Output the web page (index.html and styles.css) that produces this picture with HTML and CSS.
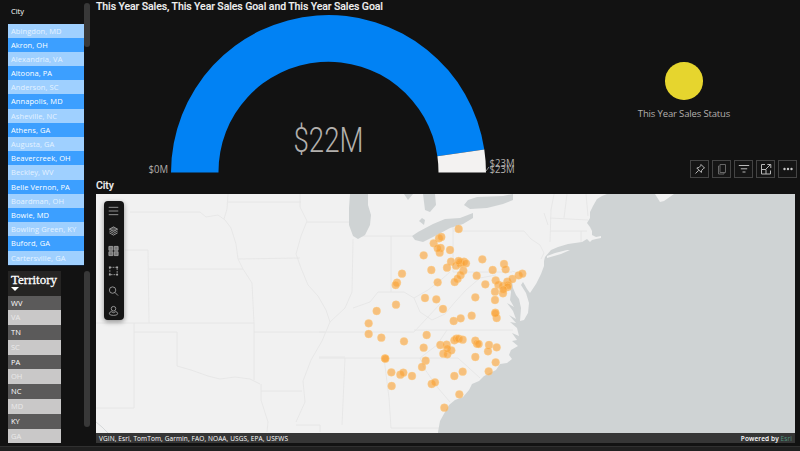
FILE: index.html
```html
<!DOCTYPE html>
<html lang="en">
<head>
<meta charset="utf-8">
<title>Sales Report</title>
<link rel="stylesheet" href="styles.css">
</head>
<body>
<div class="report">
  <aside class="sidebar">
    <section class="slicer">
      <div class="city-panel">
        <h2 class="city-head">City</h2>
        <ul class="rows city-rows">
          <li>Abingdon, MD</li><li>Akron, OH</li><li>Alexandria, VA</li><li>Altoona, PA</li><li>Anderson, SC</li><li>Annapolis, MD</li><li>Asheville, NC</li><li>Athens, GA</li><li>Augusta, GA</li><li>Beavercreek, OH</li><li>Beckley, WV</li><li>Belle Vernon, PA</li><li>Boardman, OH</li><li>Bowie, MD</li><li>Bowling Green, KY</li><li>Buford, GA</li><li>Cartersville, GA</li>
        </ul>
      </div>
      <div class="scroll scroll-city"></div>
    </section>
    <section class="slicer territory">
      <div class="territory-panel">
        <h2 class="territory-head">Territory</h2>
        <ul class="rows territory-rows">
          <li>WV</li><li>VA</li><li>TN</li><li>SC</li><li>PA</li><li>OH</li><li>NC</li><li>MD</li><li>KY</li><li>GA</li>
        </ul>
      </div>
      <div class="scroll scroll-territory"></div>
    </section>
  </aside>
  <main class="main">
    <div class="top">
      <section class="gauge">
        <h1 class="title">This Year Sales, This Year Sales Goal and This Year Sales Goal</h1>
        <svg width="434" height="165" viewBox="96 14 434 165">
          <path fill="#0182f4" d="M171 172.5A157.5 157.5 0 0 1 484.3 149.5L437.4 156.2A110 110 0 0 0 218.5 172.5Z"/>
          <path fill="#f3f2f1" d="M484.3 149.5A157.5 157.5 0 0 1 486 172.5H438.5A110 110 0 0 0 437.4 156.2Z"/>
          <path stroke="#aaa" stroke-width=".8" d="M486 171l3-4"/>
          <text class="value" x="293.500" y="152" textLength="70" lengthAdjust="spacingAndGlyphs">$22M</text>
          <text class="axis" x="148.500" y="172.500" textLength="19.500" lengthAdjust="spacingAndGlyphs">$0M</text>
          <text class="axis" x="489.500" y="166.500" textLength="25" lengthAdjust="spacingAndGlyphs">$23M</text>
          <text class="axis" x="489.500" y="172.500" textLength="25" lengthAdjust="spacingAndGlyphs">$23M</text>
        </svg>
      </section>
      <section class="kpi">
        <div class="kpi-body">
          <div class="dot"></div>
          <div class="kpi-label">This Year Sales Status</div>
        </div>
        <div class="actions">
          <button><svg viewBox="0 0 12 12"><path d="M7 1.500l3.500 3.500-1 .4-1.800 1.900-.4 2.200L2.800 5l2.200-.5 1.700-1.800zM4.700 7.300L1.500 10.500"/></svg></button>
          <button class="dim"><svg viewBox="0 0 12 12"><path d="M4 1.500h5.500v8H4zM3.500 3h-1v8h5.500v-1"/></svg></button>
          <button><svg viewBox="0 0 12 12"><path d="M.8 2.500h10.400M2.800 5.800h6.400M4.500 9h3"/></svg></button>
          <button><svg viewBox="0 0 12 12"><path d="M5 1.500H1.500v9.500H10.500V7.500M1.500 6.500H6V11M6 6L10.500 1.500M7.300 1.500h3.500V5"/></svg></button>
          <button><svg viewBox="0 0 12 12"><g fill="#c8c8c8" stroke="none"><circle cx="2.500" cy="6" r="1.200"/><circle cx="6" cy="6" r="1.200"/><circle cx="9.500" cy="6" r="1.200"/></g></svg></button>
        </div>
      </section>
    </div>
    <h2 class="title map-title">City</h2>
    <section class="map">
      <svg class="canvas" width="699" height="249" viewBox="96 194 699 249">
        <g class="borders">
          <path d="M130 212H200L206 217 218 215 225 220 231 228 236 244 238 259 243 269 252 283 254 323M228 194L227 209 224 219M228 202H301M238 259L300 258M125 250H148L149 323M149 269H243M96 323H254M134 323V408H96M134 332H177V366L191 370 208 376 220 379 235 377 250 379 260 384M254 332H325M254 323V380M261 384V400L268 422 267 432M261 391H302M319 357H345M330 322L322 341 311 360 303 381 305 402 296 422M296 425H320V432"/>
          <path d="M300 194V207L307 221 301 236 296 254 301 268 308 285 318 296 326 310 330 322 345 308 352 292 353 239M307 222H349M391 236V292M358 236H412M453 231H524L531 239 540 245M453 225V272H512M353 308L370 302 378 292 392 292 404 292 414 298 428 290 442 279 450 272M414 298L420 312 432 320 445 314 455 302 466 290 480 278 496 275M319 332H414L440 304M414 330H513M319 358H420L437 345 447 330M420 358H458L480 378M345 358L342 425M384 358L389 398 391 428M420 358L424 368 438 388 450 402M391 428H440M512 271L524 275"/>
          <path d="M540 245L544 253 541 259M554 194L551 210 550 242M567 194L564 218M550 218L588 220M550 231H587M581 231V242M586 194L588 216M544 213L548 225"/>
          <path class="coastline" d="M96 422L102 427 108 433"/>
        </g>
        <g class="water">
          <path d="M607 194L602 196 597 199 593 206 590 212 590 218 587 223 590 227 592 231 592 235 596 237 601 236 601 238 596 239 592 240 590 242 587 239 582 242 568 244 558 247 551 250 545 257 544 261 544 266 541 274 536 284 530 293 527 289 523 282 521 285 526 293 529 303 528 313 524 320 520 321 521 308 519 299 516 295 513 288 512 281 509 286 511 292 510 300 514 307 507 303 513 311 516 319 509 315 516 323 510 322 517 328 519 336 512 333 517 340 512 341 518 346 511 350 509 355 512 359 507 363 500 364 496 370 490 373 484 376 479 381 472 384 469 390 463 397 455 400 449 405 445 412 440 421 438 432V443H795V194Z"/>
          <path d="M350 194 349 208V225L353 236 358 239 365 235 370 225 371 215 368 205V194ZM423 194 425 210 430 212 436 205 435 194ZM404 194 408 200 413 194ZM412 236 418 232 433 224 445 219 460 218 473 213 473 218 463 224 450 228 437 235 423 242 415 240ZM464 205 468 200 477 197 503 196 513 194 513 200 503 204 487 208 470 209ZM419 221 422 218 425 220 424 225Z"/>
        </g>
        <path fill="#f1f1f1" d="M547 256L555 253 567 250 570 250 561 254 547 258ZM655 194H674L664 201 660 202Z"/>
        <g id="stores"></g>
      </svg>
      <nav class="tools">
        <svg viewBox="0 0 12 12"><path d="M.8 2h10.400M.8 6h10.400M.8 10h10.400"/></svg>
        <svg viewBox="0 0 12 12"><path fill="#555" d="M6 1.500L10.500 4 6 6.500 1.500 4z"/><path d="M1.500 6L6 8.500 10.500 6M1.500 8L6 10.500 10.500 8"/></svg>
        <svg viewBox="0 0 12 12"><path fill="#777" d="M1 1h4.200v4.200H1zM6.800 1H11v4.200H6.800zM1 6.800h4.200V11H1zM6.800 6.800H11V11H6.800z"/></svg>
        <svg viewBox="0 0 12 12"><path d="M2 2h8v8H2z" stroke-dasharray="2 1"/><path fill="#aaa" stroke="none" d="M1 1h2v2H1zM9 1h2v2H9zM1 9h2v2H1zM9 9h2v2H9z"/></svg>
        <svg viewBox="0 0 12 12"><circle cx="5" cy="5" r="3.500"/><path d="M7.500 7.500l3.500 3.500"/></svg>
        <svg viewBox="0 0 12 12"><circle cx="6" cy="3.500" r="2.500"/><path d="M3.500 6.700Q1.500 7 1.500 9q0 1.800 4.500 1.800T10.500 9q0-2-2-2.300Q6 9 3.500 6.700z"/></svg>
      </nav>
      <footer class="credits">
        <span>VGIN, Esri, TomTom, Garmin, FAO, NOAA, USGS, EPA, USFWS</span>
        <span class="powered">Powered by <a>Esri</a></span>
      </footer>
    </section>
  </main>
</div>
<div class="bottom-bar"></div>
<script src="map.js"></script>
</body>
</html>
```
FILE: styles.css
```css
* { box-sizing: border-box; }
body { margin: 0; width: 800px; height: 451px; overflow: hidden; background: #121212; color: #fff; font-family: "Open Sans", "Noto Sans", sans-serif; display: flex; flex-direction: column; }
h1, h2, ul { margin: 0; padding: 0; }
.report { display: grid; grid-template-columns: 96px 704px; height: 446px; flex: none; }
.sidebar { padding-left: 8px; }
.slicer { display: flex; }
.city-panel { width: 76px; height: 266px; border-bottom: 1px solid #12243c; }
.city-head { height: 23.500px; padding: 4.500px 3px 0; font-size: 7.500px; line-height: 12px; font-weight: 500; }
.rows { list-style: none; font-size: 7.500px; white-space: nowrap; }
.rows li { padding-left: 3px; }
.city-rows li { height: 14.200px; line-height: 14.500px; letter-spacing: .08px; background: #3c9fff; }
.city-rows li:nth-child(odd) { background: #9fd0ff; color: #e4f2ff; }
.scroll { width: 6px; border-radius: 3px; background: #383838; }
.scroll-city { height: 44px; margin-top: 3px; }
.territory { margin-top: 5px; }
.territory-panel { width: 76px; }
.territory-head { width: 53px; height: 24.500px; padding-left: 3px; background: #252423; font: 400 13px/17px "Liberation Serif", serif; -webkit-text-stroke: .3px #fff; }
.territory-head::after { content: ""; display: block; width: 0; border: 4px solid transparent; border-top-color: #fff; border-bottom: 0; margin-top: -1px; }
.territory-rows { width: 53px; }
.territory-rows li { height: 14.800px; line-height: 15px; background: #5b5a5a; }
.territory-rows li:nth-child(even) { background: #c9c8c8; color: #e9e9e9; }
.scroll-territory { height: 156px; }
.main { display: flex; flex-direction: column; }
.top { display: flex; height: 179px; }
.gauge { width: 434px; }
.gauge svg { display: block; }
.title { height: 14px; font: 500 10.500px/14px Roboto, sans-serif; letter-spacing: -.085px; color: #f0f0f0; white-space: nowrap; -webkit-text-stroke: .1px #f0f0f0; }
.value { font: 300 35px Roboto, sans-serif; fill: #b3b0ad; }
.axis { font: 400 10px "Open Sans", sans-serif; fill: #b3b0ad; }
.kpi { width: 270px; display: flex; flex-direction: column; }
.kpi-body { height: 160px; padding: 62px 0 0 38px; display: flex; flex-direction: column; align-items: center; }
.dot { flex: none; width: 37.500px; height: 37.500px; border-radius: 50%; background: #e6d52e; }
.kpi-label { margin-top: 6px; font-size: 9.500px; line-height: 15px; letter-spacing: -.15px; color: #b3b0ad; white-space: nowrap; }
.actions { display: flex; gap: 3px; margin-left: 160px; }
.actions button { display: flex; align-items: center; justify-content: center; width: 19px; height: 18px; padding: 0; border: 1px solid #444; background: #151515; }
.actions svg { width: 12px; height: 12px; flex: none; fill: none; stroke: #b8b8b8; stroke-width: 1; }
.actions .dim svg { stroke: #666; }
.map-title { height: 15px; }
.map { position: relative; width: 699px; height: 249px; background: #f1f1f1; overflow: hidden; }
.canvas { display: block; }
.water { fill: #cfd3d4; }
.borders { fill: none; stroke: #e4e4e4; stroke-width: .8; }
.borders .coastline { stroke: #cfd3d4; }
#stores { fill: #f9a136; fill-opacity: .62; stroke: #ffd08a; stroke-opacity: .6; stroke-width: .7; }
.tools { position: absolute; left: 7.500px; top: 7px; width: 20.500px; height: 119px; padding: 4px 0 3px; border-radius: 4px; background: #151515; box-shadow: 0 2px 5px #0006; display: flex; flex-direction: column; align-items: center; justify-content: space-between; }
.tools svg { width: 11px; height: 12px; fill: none; stroke: #aaa; stroke-width: .9; }
.credits { position: absolute; inset: auto 0 0; height: 10px; padding: 0 3px; background: #363636; display: flex; justify-content: space-between; font-size: 6.500px; line-height: 11px; letter-spacing: .11px; }
.powered { font-weight: 600; }
.powered a { color: #4f9580; font-weight: 400; }
.bottom-bar { height: 5px; background: #202020; border-top: 1px solid #303030; }
```
FILE: map.js
```js
// Store positions in map units, three units per pixel, from each region's origin.
const regions = [
  { x: 290, y: 185, points: [[506,132],[447,160],[454,156],[431,175],[452,189],[449,203],[443,190],[480,195],[401,211],[336,266],[321,293],[317,300],[424,255],[443,292],[471,248],[483,230],[511,232],[512,236],[522,230],[528,235],[498,242],[506,228],[520,257],[512,270],[503,281],[494,291],[577,223],[560,272],[586,298],[608,255],[642,237],[647,253],[617,286],[625,299],[638,303],[652,290],[667,282],[686,271],[697,266],[654,300],[653,306],[639,325],[640,314],[615,320],[615,345],[405,339],[439,343],[459,372],[556,337],[318,359],[260,378]] },
  { x: 340, y: 300, points: [[341,63],[362,55],[395,47],[466,38],[470,54],[466,40],[86,70],[86,102],[124,113],[192,124],[260,105],[251,143],[301,135],[320,134],[310,161],[322,163],[334,151],[343,121],[349,116],[356,116],[368,119],[322,146],[406,122],[411,131],[416,132],[447,135],[444,154],[470,142],[406,171],[467,187],[446,214],[135,175],[136,176],[257,182],[246,201],[154,217],[181,224],[190,218],[216,228],[155,258],[275,252],[285,247],[343,228],[368,215],[358,283],[313,323]] }
];
const layer = document.getElementById("stores");
for (const region of regions) {
  for (const [x, y] of region.points) {
    const c = document.createElementNS("http://www.w3.org/2000/svg", "circle");
    c.setAttribute("cx", region.x + x / 3);
    c.setAttribute("cy", region.y + y / 3);
    c.setAttribute("r", 3.9);
    layer.appendChild(c);
  }
}
```
